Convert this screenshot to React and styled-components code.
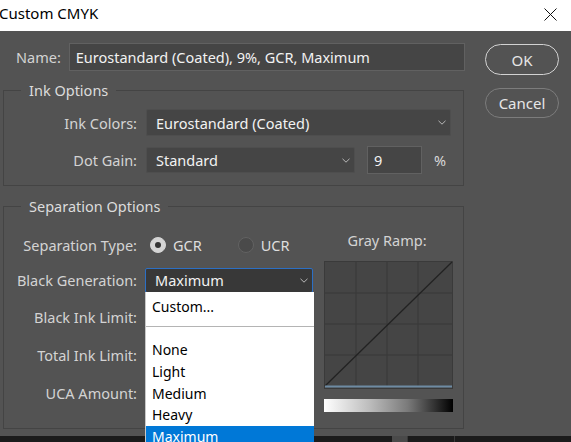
import styled, { createGlobalStyle } from 'styled-components';

const Global = createGlobalStyle`
  html, body { margin: 0; padding: 0; background: #535353; overflow: hidden; }
  body { font-family: "Noto Sans", "Open Sans", sans-serif; font-size: 14px; }
`

const Window = styled.div`
  width: 571px;
  height: 442px;
  display: flex;
  flex-direction: column;
  overflow: hidden;
`

const TitleBar = styled.div`
  height: 31px;
  flex: none;
  background: #ffffff;
  display: flex;
  align-items: center;
  justify-content: space-between;
  padding: 0 14px 6px 0;
  box-sizing: border-box;
`
const Title = styled.div`
  color: #000;
  font-size: 15px;
  margin-left: -1px;
`
const CloseWrap = styled.div`
  margin-top: 3px;
  display: flex;
`

const Body = styled.div`
  height: 405px;
  flex: none;
  background: #535353;
  display: flex;
  padding: 12px 12px 0 3px;
  box-sizing: border-box;
`

const Main = styled.div`
  width: 462px;
  display: flex;
  flex-direction: column;
`

const Buttons = styled.div`
  margin-left: 20px;
  padding-top: 1px;
  width: 74px;
  display: flex;
  flex-direction: column;
  gap: 13px;
`

const PillButton = styled.div`
  height: ${({ primary }) => (primary ? 31 : 30)}px;
  box-sizing: border-box;
  border-radius: 16px;
  border: ${({ primary }) => (primary ? '1.5px solid #d2d2d2' : '1px solid #7c7c7c')};
  color: #e6e6e6;
  font-size: 15px;
  display: flex;
  align-items: center;
  justify-content: center;
`

const NameRow = styled.div`
  display: flex;
  align-items: center;
  padding-left: 13px;
  gap: 8px;
`

const Label = styled.div`
  color: #d3d3d3;
  font-size: 14.5px;
  white-space: nowrap;
`

const TextField = styled.div`
  flex: ${({ width }) => (width ? 'none' : 1)};
  width: ${({ width }) => (width ? `${width}px` : 'auto')};
  height: ${({ height }) => height || 28}px;
  box-sizing: border-box;
  background: #454545;
  border: 1px solid #616161;
  color: #f2f2f2;
  font-size: 14.5px;
  display: flex;
  align-items: center;
  padding-left: 6px;
`

const Group = styled.fieldset`
  margin: ${({ top }) => top}px 0 0 0;
  padding: ${({ pad }) => pad};
  width: 461px;
  box-sizing: border-box;
  border: 1px solid #444444;
  min-width: 0;
`

const Legend = styled.legend`
  margin-left: 17px;
  padding: 0 8px;
  color: #dcdcdc;
  font-size: 14.5px;
  line-height: 18px;
`

const FieldRow = styled.div`
  display: grid;
  grid-template-columns: 133px auto;
  column-gap: 9px;
  align-items: center;
  & + & { margin-top: 10px; }
`

const RightLabel = styled(Label)`
  text-align: right;
`

const Inline = styled.div`
  display: flex;
  align-items: center;
  gap: ${({ gap }) => gap || 0}px;
`

const Select = styled.div`
  position: relative;
  width: ${({ width }) => width}px;
  height: ${({ height }) => height || 27}px;
  box-sizing: border-box;
  background: ${({ focused }) => (focused ? '#383838' : '#454545')};
  border: 1px solid ${({ focused }) => (focused ? '#2c6fc4' : '#4e4e4e')};
  border-radius: 2px;
  color: #f2f2f2;
  font-size: 14.5px;
  display: flex;
  align-items: center;
  justify-content: space-between;
  padding: 0 4px 0 9px;
`

const Chevron = () => (
  <svg width="8" height="5" viewBox="0 0 8 5">
    <polyline points="0.5,0.8 4,4.2 7.5,0.8" fill="none" stroke="#b8b8b8" strokeWidth="1" />
  </svg>
)

const Percent = styled.span`
  color: #d8d8d8;
  font-size: 14.5px;
`

const SepContent = styled.div`
  display: flex;
  padding: 17px 0 16px 0;
`

const LeftCol = styled.div`
  width: 309px;
  display: flex;
  flex-direction: column;
`

const SepRow = styled.div`
  height: 26px;
  margin-top: ${({ space }) => space || 0}px;
  display: grid;
  grid-template-columns: 133px auto;
  column-gap: 8px;
  align-items: center;
`

const Radio = styled.span`
  width: 16px;
  height: 16px;
  box-sizing: border-box;
  border-radius: 50%;
  display: inline-flex;
  align-items: center;
  justify-content: center;
  background: ${({ checked }) => (checked ? '#d4d4d4' : '#4a4a4a')};
  border: 1px solid ${({ checked }) => (checked ? '#d4d4d4' : '#626262')};
  &::after {
    content: '';
    width: 6px;
    height: 6px;
    border-radius: 50%;
    background: ${({ checked }) => (checked ? '#333' : 'transparent')};
  }
`

const RadioText = styled.span`
  color: #dedede;
  font-size: 14.5px;
  margin-left: 7px;
  margin-right: ${({ after }) => after || 0}px;
`

const RadioGroup = styled.div`
  display: flex;
  align-items: center;
  padding-left: 5px;
`

const Dropdown = styled.div`
  position: absolute;
  top: 100%;
  left: -1px;
  width: 168px;
  background: #ffffff;
  border-left: 1px solid #c8c8c8;
  padding-top: 4px;
  z-index: 5;
`

const Option = styled.div`
  height: 21.75px;
  line-height: 21.75px;
  padding-left: 6px;
  font-size: 14px;
  color: ${({ active }) => (active ? '#ffffff' : '#000000')};
  background: ${({ active }) => (active ? '#0078d7' : 'transparent')};
`

const Separator = styled.div`
  height: 21.75px;
  box-sizing: border-box;
  padding-top: 9px;
  &::before {
    content: '';
    display: block;
    height: 1px;
    background: #b4b4b4;
  }
`

const RampCol = styled.div`
  margin-left: 11px;
  margin-top: -1px;
  width: 129px;
  display: flex;
  flex-direction: column;
  align-items: center;
`

const RampLabel = styled(Label)`
  line-height: 18px;
  margin-left: -3px;
`

const RampGraph = styled.div`
  margin-top: 12px;
  width: 129px;
  height: 128px;
`

const GradientBar = styled.div`
  margin-top: 10px;
  width: 129px;
  height: 13px;
  background: linear-gradient(to right, #ffffff 0%, #bdbdbd 35%, #7a7a7a 65%, #000000 100%);
`

const BottomStrip = styled.div`
  flex: 1;
  background: #1b1b1b;
  display: flex;
  padding-left: 392px;
  gap: 4px;
`
const StripBlock = styled.div`
  width: ${({ w }) => w}px;
  background: ${({ c }) => c};
  border-right: 1px solid #3a3a3a;
`

const Ramp = () => (
  <svg width="129" height="128" viewBox="0 0 129 128">
    <rect x="0.5" y="0.5" width="128" height="127" fill="#454545" stroke="#3a3a3a" />
    {[32, 63, 94].map((v) => (
      <g key={v}>
        <line x1={v} y1="1" x2={v} y2="125" stroke="#393939" strokeWidth="1" />
        <line x1="1" y1={v} x2="128" y2={v} stroke="#393939" strokeWidth="1" />
      </g>
    ))}
    <line x1="1" y1="125" x2="128" y2="1" stroke="#222222" strokeWidth="1.3" />
    <line x1="1" y1="125.5" x2="128" y2="125.5" stroke="#6e8ba3" strokeWidth="2" />
  </svg>
)

const CloseIcon = () => (
  <svg width="13" height="13" viewBox="0 0 13 13">
    <path d="M0.5 0.5 L12.5 12.5 M12.5 0.5 L0.5 12.5" stroke="#111" strokeWidth="1" fill="none" />
  </svg>
)

const options = ['None', 'Light', 'Medium', 'Heavy', 'Maximum']

export default function App() {
  return (
    <Window>
      <Global />
      <TitleBar>
        <Title>Custom CMYK</Title>
        <CloseWrap>
          <CloseIcon />
        </CloseWrap>
      </TitleBar>
      <Body>
        <Main>
          <NameRow>
            <Label>Name:</Label>
            <TextField>Eurostandard (Coated), 9%, GCR, Maximum</TextField>
          </NameRow>

          <Group top={10} pad="10px 0 11px 0">
            <Legend>Ink Options</Legend>
            <FieldRow>
              <RightLabel>Ink Colors:</RightLabel>
              <Select width={305}>
                <span>Eurostandard (Coated)</span>
                <Chevron />
              </Select>
            </FieldRow>
            <FieldRow>
              <RightLabel>Dot Gain:</RightLabel>
              <Inline gap={12}>
                <Select width={209} height={26}>
                  <span>Standard</span>
                  <Chevron />
                </Select>
                <TextField width={55} height={28}>9</TextField>
                <Percent>%</Percent>
              </Inline>
            </FieldRow>
          </Group>

          <Group top={11} pad="0">
            <Legend>Separation Options</Legend>
            <SepContent>
              <LeftCol>
                <SepRow>
                  <RightLabel>Separation Type:</RightLabel>
                  <RadioGroup>
                    <Radio checked />
                    <RadioText after={36}>GCR</RadioText>
                    <Radio />
                    <RadioText>UCR</RadioText>
                  </RadioGroup>
                </SepRow>
                <SepRow space={9}>
                  <RightLabel>Black Generation:</RightLabel>
                  <Select width={168} height={25} focused>
                    <span>Maximum</span>
                    <Chevron />
                    <Dropdown>
                      <Option>Custom...</Option>
                      <Separator />
                      {options.map((o) => (
                        <Option key={o} active={o === 'Maximum'}>{o}</Option>
                      ))}
                    </Dropdown>
                  </Select>
                </SepRow>
                <SepRow space={11}>
                  <RightLabel>Black Ink Limit:</RightLabel>
                  <TextField width={60} height={26} />
                </SepRow>
                <SepRow space={12}>
                  <RightLabel>Total Ink Limit:</RightLabel>
                  <TextField width={60} height={26} />
                </SepRow>
                <SepRow space={12}>
                  <RightLabel>UCA Amount:</RightLabel>
                  <TextField width={60} height={26} />
                </SepRow>
              </LeftCol>
              <RampCol>
                <RampLabel>Gray Ramp:</RampLabel>
                <RampGraph>
                  <Ramp />
                </RampGraph>
                <GradientBar />
              </RampCol>
            </SepContent>
          </Group>
        </Main>
        <Buttons>
          <PillButton primary>OK</PillButton>
          <PillButton>Cancel</PillButton>
        </Buttons>
      </Body>
      <BottomStrip>
        <StripBlock w={15} c="#4a4a4a" />
        <StripBlock w={42} c="#1b1b1b" />
      </BottomStrip>
    </Window>
  )
}
